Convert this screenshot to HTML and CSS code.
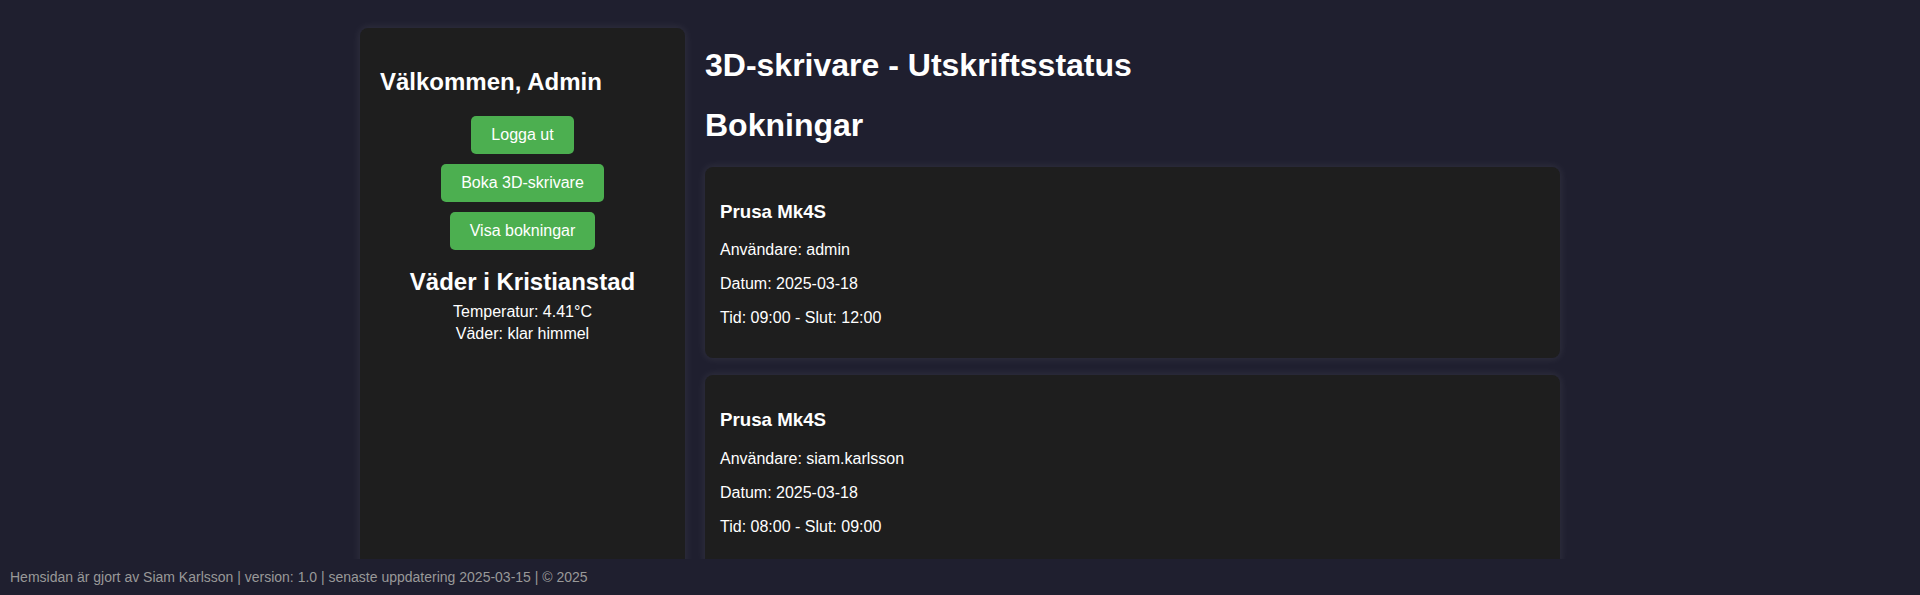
FILE: index.html
```html
<!DOCTYPE html>
<html lang="sv">
<head>
<meta charset="utf-8">
<title>3D-skrivare - Utskriftsstatus</title>
<link rel="stylesheet" href="styles.css">
</head>
<body>
<div class="container">
  <aside class="sidebar">
    <h2 class="welcome">Välkommen, Admin</h2>
    <button class="btn">Logga ut</button>
    <button class="btn">Boka 3D-skrivare</button>
    <button class="btn">Visa bokningar</button>
    <div class="weather">
      <h2 class="weather-title">Väder i Kristianstad</h2>
      <p class="weather-line">Temperatur: 4.41°C</p>
      <p class="weather-line">Väder: klar himmel</p>
    </div>
  </aside>
  <main class="main">
    <h1 class="page-title">3D-skrivare - Utskriftsstatus</h1>
    <h2 class="section-title">Bokningar</h2>
    <div class="card">
      <h3 class="card-title">Prusa Mk4S</h3>
      <p class="card-line">Användare: admin</p>
      <p class="card-line">Datum: 2025-03-18</p>
      <p class="card-line">Tid: 09:00 - Slut: 12:00</p>
    </div>
    <div class="card">
      <h3 class="card-title">Prusa Mk4S</h3>
      <p class="card-line">Användare: siam.karlsson</p>
      <p class="card-line">Datum: 2025-03-18</p>
      <p class="card-line">Tid: 08:00 - Slut: 09:00</p>
    </div>
  </main>
</div>
<footer class="footer">Hemsidan är gjort av Siam Karlsson | version: 1.0 | senaste uppdatering 2025-03-15 | © 2025</footer>
</body>
</html>
```

FILE: styles.css
```css
html, body {
  margin: 0;
  padding: 0;
}

body {
  background: #1f1f2f;
  color: #ffffff;
  font-family: "Liberation Sans", Arial, sans-serif;
  font-size: 16px;
}

.container {
  width: 1200px;
  margin: 28px auto 0;
  display: flex;
  gap: 20px;
  align-items: stretch;
}

.sidebar {
  width: 285px;
  flex: 0 0 auto;
  padding: 20px;
  background: #1e1e1e;
  border-radius: 8px;
  box-shadow: 0 0 10px rgba(255, 255, 255, 0.1);
  display: flex;
  flex-direction: column;
  align-items: center;
}

.welcome {
  align-self: stretch;
  font-size: 24px;
  margin: 20px 0 20px;
}

.btn {
  display: block;
  background: #4caf50;
  color: #ffffff;
  border: none;
  border-radius: 5px;
  padding: 10px 20px;
  font-family: "Liberation Sans", Arial, sans-serif;
  font-size: 16px;
  line-height: normal;
  margin: 0 0 10px;
  cursor: pointer;
}

.weather {
  text-align: center;
  margin-top: 8px;
}

.weather-title {
  font-size: 24px;
  margin: 0 0 5px;
}

.weather-line {
  margin: 0;
  line-height: 22px;
}

.main {
  flex: 1;
  min-width: 0;
}

.page-title {
  font-size: 32px;
  margin: 19px 0 23px;
}

.section-title {
  font-size: 32px;
  margin: 0 0 23px;
}

.card {
  background: #1e1e1e;
  border-radius: 8px;
  padding: 15px;
  margin-bottom: 17px;
  box-shadow: 0 0 10px rgba(255, 255, 255, 0.1);
}

.card-title {
  font-size: 18.72px;
  margin: 18.72px 0;
}

.card-line {
  margin: 16px 0;
}

.footer {
  position: fixed;
  left: 0;
  right: 0;
  bottom: 0;
  height: 16px;
  padding: 10px;
  background: #1f1f2f;
  color: #999999;
  font-size: 14px;
  line-height: 16px;
}
```
